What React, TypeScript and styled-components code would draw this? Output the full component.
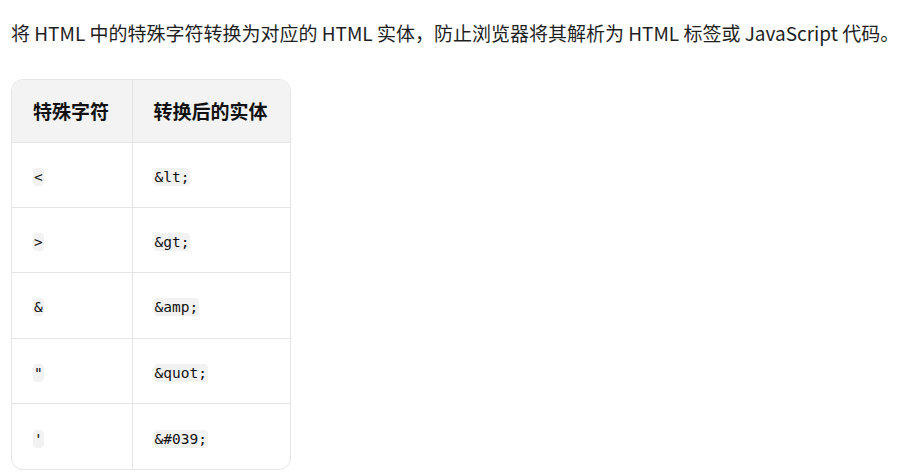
import styled, { createGlobalStyle } from "styled-components";

const GlobalStyle = createGlobalStyle`
  body {
    margin: 0;
    background: #ffffff;
    color: #1f1f1f;
    font-family: "Noto Sans CJK SC", "Noto Sans", sans-serif;
  }
`

const Page = styled.div`
  padding: 19px 11px 0 11px;
`

const Intro = styled.p`
  margin: 0 0 32px 0;
  font-size: 19px;
  line-height: 28px;
  white-space: nowrap;
`

const TableWrap = styled.div`
  display: inline-block;
  border: 1px solid #e5e5e5;
  border-radius: 12px;
  overflow: hidden;
`

const Table = styled.table`
  border-collapse: collapse;
  border-spacing: 0;
`

const HeadCell = styled.th<{ $width: number }>`
  width: ${(props) => props.$width}px;
  box-sizing: border-box;
  height: 62px;
  padding: 0 21px;
  text-align: left;
  white-space: nowrap;
  background: #f3f3f3;
  font-size: 19px;
  font-weight: 700;
  color: #111;
  border-bottom: 1px solid #e5e5e5;
  & + & {
    border-left: 1px solid #e5e5e5;
  }
`

const Row = styled.tr`
  & + & td {
    border-top: 1px solid #e5e5e5;
  }
`

const Cell = styled.td`
  height: 65.4px;
  box-sizing: border-box;
  padding: 0 21px;
  & + & {
    border-left: 1px solid #e5e5e5;
  }
`

const Code = styled.code`
  font-family: "DejaVu Sans Mono", "Liberation Mono", monospace;
  font-size: 14.5px;
  line-height: 18px;
  display: inline-block;
  background: #f2f2f2;
  border-radius: 4px;
  padding: 0 1px;
  color: #111;
`

const rows = [
  ["<", "&lt;"],
  [">", "&gt;"],
  ["&", "&amp;"],
  ['"', "&quot;"],
  ["'", "&#039;"],
]

function App() {
  return (
    <Page>
      <GlobalStyle />
      <Intro>
        将 HTML 中的特殊字符转换为对应的 HTML 实体，防止浏览器将其解析为 HTML 标签或 JavaScript 代码。
      </Intro>
      <TableWrap>
        <Table>
          <thead>
            <tr>
              <HeadCell $width={120}>特殊字符</HeadCell>
              <HeadCell $width={158}>转换后的实体</HeadCell>
            </tr>
          </thead>
          <tbody>
            {rows.map(([ch, entity]) => (
              <Row key={entity}>
                <Cell><Code>{ch}</Code></Cell>
                <Cell><Code>{entity}</Code></Cell>
              </Row>
            ))}
          </tbody>
        </Table>
      </TableWrap>
    </Page>
  );
}

export default App;
